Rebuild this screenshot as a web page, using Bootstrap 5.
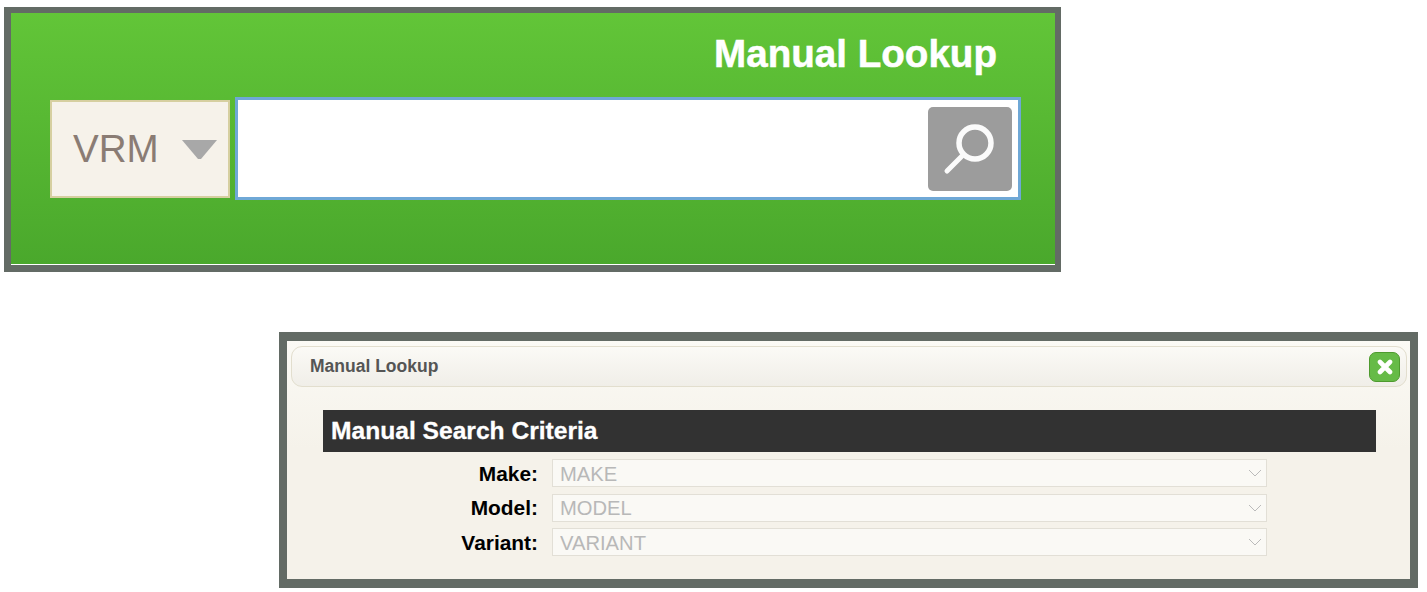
<!DOCTYPE html>
<html lang="en">
<head>
    <meta charset="UTF-8">
    <title>Manual Lookup</title>
    <link href="https://cdn.jsdelivr.net/npm/bootstrap@5.3.3/dist/css/bootstrap.min.css" rel="stylesheet">
    <style>
      body { background: #fff; font-family: "Liberation Sans", Arial, sans-serif; }

      /* top green panel */
      .lookup-bar {
        width: 1057px; height: 265px; margin: 7px 0 0 4px;
        border: 6px solid #636b65; border-left-width: 7px; border-bottom-width: 7px;
        background: linear-gradient(#62c538, #4aa82c);
        box-shadow: inset 0 -1px 0 #fff;
      }
      .lookup-title { font-size: 38.6px; font-weight: 700; color: #fff; line-height: 44px; padding: 19px 58px 0 0; text-align: right; -webkit-text-stroke: .5px #fff; }
      .lookup-row { padding: 21px 0 0 39px; gap: 5px; }
      .vrm-box {
        width: 180px; height: 98px; margin-top: 3px; padding: 0 11px 0 21px;
        background: #f6f2ea; border: 2px solid #d6cfa0;
        font-size: 38.6px; color: #8a7c74;
      }
      .vrm-field { width: 786px; height: 103px; background: #fff; border: 3px solid #6fa8d6; padding: 6px; }
      .vrm-field input { border: 0; outline: 0; min-width: 0; }
      .search-go { width: 84px; height: 84px; padding: 0; border: 0; border-radius: 5px; background: #9c9c9c; }

      /* dialog */
      .lookup-dialog {
        width: 1139px; height: 256px; margin: 60px 0 0 279px;
        border: 8px solid #636b65; border-top-width: 9px; border-bottom-width: 9px;
        background: linear-gradient(#fbfaf5, #f5f2ea 45%); padding: 5px 3px 0 4px;
      }
      .dialog-head {
        height: 41px; padding: 0 6px 0 18px;
        background: linear-gradient(#fbfaf6, #f0eee8);
        border: 1px solid #e2dece; border-radius: 11px;
        font-size: 17.5px; font-weight: 700; color: #555;
      }
      .dialog-close { width: 31px; height: 30px; padding: 0; border: 1px solid #4e9a2e; border-radius: 7px; background: #66bb47; }
      .criteria-title {
        margin: 23px 31px 0 32px; height: 42px; padding-left: 8px;
        background: #323232; color: #fff; font-size: 24.6px; font-weight: 700; line-height: 42px;
        -webkit-text-stroke: .3px #fff;
      }
      .criteria-form { margin: 7px 0 0 0; row-gap: 6.5px; display: flex; flex-direction: column; }
      .crit-label { width: 247px; margin: 0; padding-top: 1px; text-align: right; font-size: 20.9px; font-weight: 700; color: #000; line-height: 24px; }
      .crit-select {
        width: 715px; height: 28px; margin-left: 14px; padding: 1px 30px 0 7px;
        border: 1px solid #e2dfd6; border-radius: 0;
        font-size: 20.2px; line-height: 24px; font-family: inherit;
        background-color: #faf9f5;
        background-image: url("data:image/svg+xml,%3csvg xmlns='http://www.w3.org/2000/svg' viewBox='0 0 14 8'%3e%3cpath fill='none' stroke='%23bbb' stroke-width='1' d='M1 1l6 6 6-6'/%3e%3c/svg%3e");
        background-position: right 4px center; background-size: 14px 8px;
      }
      .crit-select:disabled { color: #b8b8b8; background-color: #faf9f5; }
    </style>
</head>
<body class="m-0">

<!-- Lookup bar -->
<div class="lookup-bar">
    <div class="lookup-title">Manual Lookup</div>
    <div class="lookup-row d-flex align-items-start">
        <div class="vrm-box d-flex align-items-center justify-content-between">
            <span>VRM</span>
            <svg width="35" height="19" viewBox="0 0 35 19"><path fill="#a8a8a8" d="M0 0h35L19 19h-3z"/></svg>
        </div>
        <div class="vrm-field d-flex align-items-center">
            <input type="text" class="flex-grow-1" aria-label="VRM">
            <button type="button" class="search-go d-flex" aria-label="Search">
                <svg width="84" height="84" viewBox="0 0 84 84" fill="none" stroke="#fbfbfb" stroke-linecap="round">
                    <circle cx="47" cy="36" r="16" stroke-width="5.5"/>
                    <path d="M34 49 19 64" stroke-width="5"/>
                </svg>
            </button>
        </div>
    </div>
</div>

<!-- Manual lookup dialog -->
<div class="lookup-dialog">
    <div class="dialog-head d-flex align-items-center justify-content-between">
        <span>Manual Lookup</span>
        <button type="button" class="dialog-close d-flex align-items-center justify-content-center" aria-label="Close">
            <svg width="16" height="16" viewBox="0 0 16 16" fill="none" stroke="#fff" stroke-width="4.6" stroke-linecap="round"><path d="M3 3l10 10M13 3 3 13"/></svg>
        </button>
    </div>
    <div class="criteria-title">Manual Search Criteria</div>
    <form class="criteria-form">
        <div class="d-flex align-items-center">
            <label class="crit-label" for="make">Make:</label>
            <select class="form-select crit-select" id="make" disabled><option>MAKE</option></select>
        </div>
        <div class="d-flex align-items-center">
            <label class="crit-label" for="model">Model:</label>
            <select class="form-select crit-select" id="model" disabled><option>MODEL</option></select>
        </div>
        <div class="d-flex align-items-center">
            <label class="crit-label" for="variant">Variant:</label>
            <select class="form-select crit-select" id="variant" disabled><option>VARIANT</option></select>
        </div>
    </form>
</div>

<script src="https://cdn.jsdelivr.net/npm/bootstrap@5.3.3/dist/js/bootstrap.bundle.min.js"></script>
</body>
</html>
